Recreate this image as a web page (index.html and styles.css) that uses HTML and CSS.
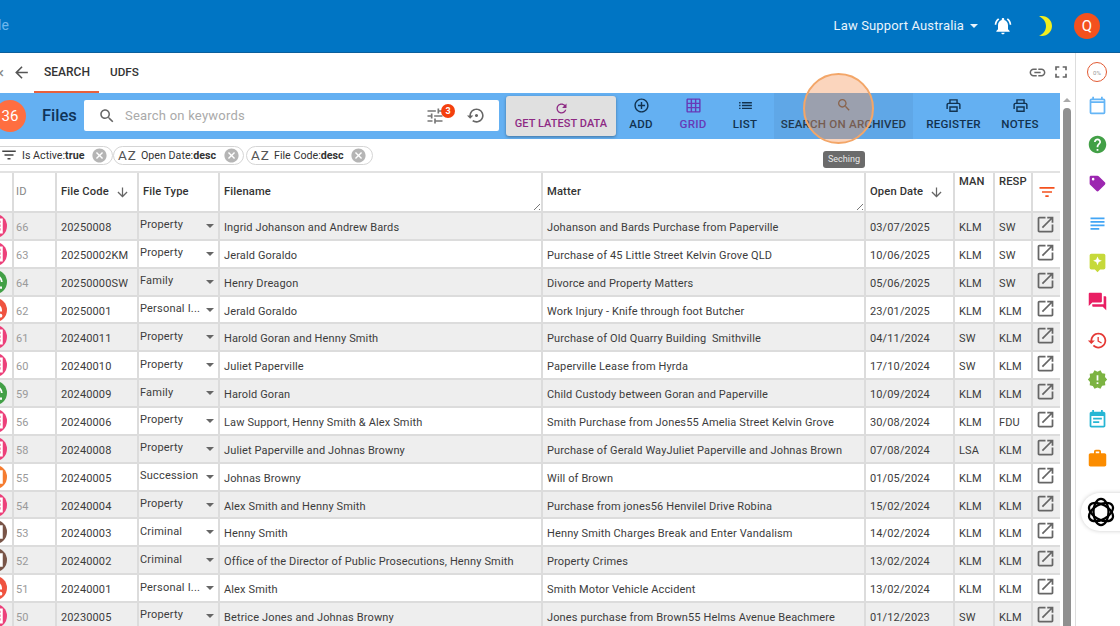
FILE: index.html
```html
<!DOCTYPE html>
<html lang="en">
<head>
<meta charset="utf-8">
<title>Files</title>
<link rel="stylesheet" href="styles.css">
</head>
<body>
<svg class="defs" width="0" height="0">
  <defs>
    <symbol id="i-open" viewBox="0 0 24 24"><path d="M19 19H5V5h7V3H5c-1.11 0-2 .9-2 2v14c0 1.1.89 2 2 2h14c1.1 0 2-.9 2-2v-7h-2v7zM14 3v2h3.59l-9.83 9.83 1.41 1.41L19 6.41V10h2V3h-7z"/></symbol>
    <symbol id="i-print" viewBox="0 0 24 24"><path d="M19 8h-1V3H6v5H5c-1.66 0-3 1.34-3 3v6h4v4h12v-4h4v-6c0-1.66-1.34-3-3-3zM8 5h8v3H8V5zm8 14H8v-4h8v4zm2-2v-4H6v4H4v-6c0-.55.45-1 1-1h14c.55 0 1 .45 1 1v6h-2z"/></symbol>
    <symbol id="i-cancel" viewBox="0 0 24 24"><path d="M12 2C6.47 2 2 6.47 2 12s4.47 10 10 10 10-4.47 10-10S17.53 2 12 2zm5 13.59L15.59 17 12 13.41 8.41 17 7 15.59 10.59 12 7 8.41 8.41 7 12 10.59 15.59 7 17 8.41 13.41 12 17 15.59z"/></symbol>
    <symbol id="i-down" viewBox="0 0 24 24"><path d="M20 12l-1.41-1.41L13 16.17V4h-2v12.17l-5.58-5.59L4 12l8 8 8-8z"/></symbol>
    <symbol id="i-filter" viewBox="0 0 24 24"><path d="M10 18h4v-2h-4v2zM3 6v2h18V6H3zm3 7h12v-2H6v2z"/></symbol>
    <symbol id="i-building" viewBox="0 0 24 24"><path d="M3 2h18v20H3zM6 5v3h3V5zm4.500 0v3h3V5zM15 5v3h3V5zM6 10v3h3v-3zm4.500 0v3h3v-3zm4.500 0v3h3v-3zM6 15v3h3v-3zm4.500 0v3h3v-3zm4.500 0v3h3v-3z" fill-rule="evenodd"/></symbol>
    <symbol id="i-people" viewBox="0 0 24 24"><path d="M12 3a9 9 0 0 0-9 9h2.500a6.500 6.500 0 0 1 13 0H21a9 9 0 0 0-9-9zm0 5a4 4 0 1 0 0 8 4 4 0 0 0 0-8zm0 2a2 2 0 1 1 0 4 2 2 0 0 1 0-4zM4 18h16v3H4z" fill-rule="evenodd"/></symbol>
    <symbol id="i-injury" viewBox="0 0 24 24"><path d="M12 4a8 8 0 0 0-8 8v2h3v-2a5 5 0 0 1 10 0v2h3v-2a8 8 0 0 0-8-8zM6 17a2.500 2.500 0 1 0 0 5 2.500 2.500 0 0 0 0-5zm12 0a2.500 2.500 0 1 0 0 5 2.500 2.500 0 0 0 0-5z"/></symbol>
    <symbol id="i-book" viewBox="0 0 24 24"><path d="M3 3h18v18H3zM7 6v12h3V6zm7 0v12h3V6z" fill-rule="evenodd"/></symbol>
  </defs>
</svg>

<header class="topbar">
  <span class="brand">Bundle</span>
  <div class="top-right">
    <span class="org">Law Support Australia</span>
    <span class="caret"></span>
    <svg class="bell" viewBox="0 0 24 24"><path d="M7.580 4.080L6.150 2.650C3.750 4.480 2.170 7.300 2.030 10.500h2c.15-2.650 1.510-4.970 3.550-6.420zm12.390 6.420h2c-.15-3.200-1.730-6.020-4.120-7.850l-1.420 1.430c2.020 1.450 3.390 3.770 3.540 6.420zM18 11c0-3.070-1.640-5.640-4.500-6.320V4c0-.83-.67-1.500-1.500-1.500s-1.500.67-1.500 1.500v.68C7.630 5.360 6 7.920 6 11v5l-2 2v1h16v-1l-2-2v-5zm-6 11c.14 0 .27-.01.4-.04.65-.14 1.180-.58 1.440-1.180.1-.24.15-.5.15-.78h-4c.01 1.100.9 2 2.010 2z"/></svg>
    <svg class="moon" viewBox="0 0 24 24"><path d="M9 2c-1.050 0-2.050.16-3 .46 4.060 1.270 7 5.060 7 9.540 0 4.480-2.940 8.270-7 9.540.95.3 1.950.46 3 .46 5.520 0 10-4.480 10-10S14.520 2 9 2z"/></svg>
    <span class="avatar">Q</span>
  </div>
</header>

<div class="body-row">
  <main class="content">
    <nav class="tabs">
      <span class="tab-x">×</span>
      <svg class="back" viewBox="0 0 24 24"><path d="M20 11H7.830l5.590-5.590L12 4l-8 8 8 8 1.410-1.410L7.830 13H20v-2z"/></svg>
      <span class="tab active">SEARCH</span>
      <span class="tab">UDFS</span>
      <span class="tab-tools">
        <svg class="tool-link" viewBox="0 0 24 24"><path d="M3.900 12c0-1.710 1.390-3.100 3.100-3.100h4V7H7c-2.760 0-5 2.240-5 5s2.240 5 5 5h4v-1.900H7c-1.710 0-3.100-1.390-3.100-3.100zM8 13h8v-2H8v2zm9-6h-4v1.900h4c1.710 0 3.100 1.390 3.100 3.100s-1.390 3.100-3.100 3.100h-4V17h4c2.760 0 5-2.240 5-5s-2.240-5-5-5z"/></svg>
        <svg class="tool-full" viewBox="0 0 24 24"><path d="M7 14H5v5h5v-2H7v-3zm-2-4h2V7h3V5H5v5zm12 7h-3v2h5v-5h-2v3zM14 5v2h3v3h2V5h-5z"/></svg>
      </span>
    </nav>

    <div class="main-scroll">
      <div class="panel">
        <section class="toolbar">
          <span class="count">36</span>
          <span class="title">Files</span>
          <div class="searchbox">
            <svg class="sb-search" viewBox="0 0 24 24"><path d="M15.500 14h-.79l-.28-.27C15.410 12.590 16 11.110 16 9.500 16 5.910 13.090 3 9.500 3S3 5.910 3 9.500 5.910 16 9.500 16c1.610 0 3.090-.59 4.230-1.570l.27.28v.79l5 4.990L20.490 19l-4.990-5zm-6 0C7.010 14 5 11.990 5 9.500S7.010 5 9.500 5 14 7.010 14 9.500 11.990 14 9.500 14z"/></svg>
            <span class="placeholder">Search on keywords</span>
            <span class="tune-wrap">
              <svg class="sb-tune" viewBox="0 0 24 24"><path d="M3 17v2h6v-2H3zM3 5v2h10V5H3zm10 16v-2h8v-2h-8v-2h-2v6h2zM7 9v2H3v2h4v2h2V9H7zm14 4v-2H11v2h10zm-6-4h2V7h4V5h-4V3h-2v6z"/></svg>
              <span class="tune-badge">3</span>
            </span>
            <svg class="sb-restore" viewBox="0 0 24 24"><path d="M14 12c0-1.100-.9-2-2-2s-2 .9-2 2 .9 2 2 2 2-.9 2-2zm-2-9c-4.970 0-9 4.030-9 9H0l4 4 4-4H5c0-3.870 3.130-7 7-7s7 3.130 7 7-3.130 7-7 7c-1.510 0-2.910-.49-4.060-1.300l-1.420 1.440C8.040 20.300 9.940 21 12 21c4.970 0 9-4.030 9-9s-4.030-9-9-9z"/></svg>
          </div>
          <button class="latest">
            <svg viewBox="0 0 24 24"><path d="M17.650 6.350C16.200 4.900 14.210 4 12 4c-4.420 0-7.990 3.580-7.990 8s3.570 8 7.990 8c3.730 0 6.840-2.550 7.730-6h-2.080c-.82 2.330-3.040 4-5.650 4-3.310 0-6-2.690-6-6s2.690-6 6-6c1.660 0 3.140.69 4.220 1.780L13 11h7V4l-2.350 2.350z"/></svg>
            <span>GET LATEST DATA</span>
          </button>
          <div class="actions">
            <button class="act"><svg viewBox="0 0 24 24"><path d="M13 7h-2v4H7v2h4v4h2v-4h4v-2h-4V7zm-1-5C6.480 2 2 6.480 2 12s4.480 10 10 10 10-4.480 10-10S17.520 2 12 2zm0 18c-4.410 0-8-3.590-8-8s3.590-8 8-8 8 3.590 8 8-3.590 8-8 8z"/></svg><span>ADD</span></button>
            <button class="act act-grid"><svg viewBox="0 0 24 24"><path d="M20 2H4c-1.100 0-2 .9-2 2v16c0 1.100.9 2 2 2h16c1.100 0 2-.9 2-2V4c0-1.100-.9-2-2-2zM8 20H4v-4h4v4zm0-6H4v-4h4v4zm0-6H4V4h4v4zm6 12h-4v-4h4v4zm0-6h-4v-4h4v4zm0-6h-4V4h4v4zm6 12h-4v-4h4v4zm0-6h-4v-4h4v4zm0-6h-4V4h4v4z"/></svg><span>GRID</span></button>
            <button class="act"><svg viewBox="0 0 24 24"><path d="M3 13h2v-2H3v2zm0 4h2v-2H3v2zm0-8h2V7H3v2zm4 4h14v-2H7v2zm0 4h14v-2H7v2zM7 7v2h14V7H7z"/></svg><span>LIST</span></button>
            <span></span>
            <button class="act act-hover"><svg viewBox="0 0 24 24"><path d="M15.500 14h-.79l-.28-.27C15.410 12.590 16 11.110 16 9.500 16 5.910 13.090 3 9.500 3S3 5.910 3 9.500 5.910 16 9.500 16c1.610 0 3.090-.59 4.230-1.570l.27.28v.79l5 4.990L20.490 19l-4.990-5zm-6 0C7.010 14 5 11.990 5 9.500S7.010 5 9.500 5 14 7.010 14 9.500 11.990 14 9.500 14z"/></svg><span>SEARCH ON ARCHIVED</span></button>
            <button class="act"><svg><use href="#i-print"/></svg><span>REGISTER</span></button>
            <button class="act"><svg><use href="#i-print"/></svg><span>NOTES</span></button>
          </div>
        </section>

        <div class="chips">
          <span class="chip chip-1"><svg class="chip-f"><use href="#i-filter"/></svg><span class="chip-t">Is Active:<b>true</b></span><svg class="chip-x"><use href="#i-cancel"/></svg></span>
          <span class="chip chip-2"><span class="az">A<i>Z</i></span><span class="chip-t">Open Date:<b>desc</b></span><svg class="chip-x"><use href="#i-cancel"/></svg></span>
          <span class="chip chip-3"><span class="az">A<i>Z</i></span><span class="chip-t">File Code:<b>desc</b></span><svg class="chip-x"><use href="#i-cancel"/></svg></span>
        </div>

        <div class="grid">
          <div class="row head">
            <div class="c"></div>
            <div class="c id">ID</div>
            <div class="c">File Code<svg class="sort"><use href="#i-down"/></svg></div>
            <div class="c">File Type</div>
            <div class="c rs">Filename</div>
            <div class="c rs">Matter</div>
            <div class="c">Open Date<svg class="sort"><use href="#i-down"/></svg></div>
            <div class="c top">MAN</div>
            <div class="c top">RESP</div>
            <div class="c act-c"><svg class="hfilter"><use href="#i-filter"/></svg></div>
          </div>

          <div class="row"><div class="c st"><span class="dot pink"><svg><use href="#i-building"/></svg></span></div><div class="c id">66</div><div class="c">20250008</div><div class="c ty"><span>Property</span><i class="dd"></i></div><div class="c">Ingrid Johanson and Andrew Bards</div><div class="c">Johanson and Bards Purchase from Paperville</div><div class="c">03/07/2025</div><div class="c">KLM</div><div class="c">SW</div><div class="c act-c"><svg class="open"><use href="#i-open"/></svg></div></div>
          <div class="row"><div class="c st"><span class="dot pink"><svg><use href="#i-building"/></svg></span></div><div class="c id">63</div><div class="c">20250002KM</div><div class="c ty"><span>Property</span><i class="dd"></i></div><div class="c">Jerald Goraldo</div><div class="c">Purchase of 45 Little Street Kelvin Grove QLD</div><div class="c">10/06/2025</div><div class="c">KLM</div><div class="c">SW</div><div class="c act-c"><svg class="open"><use href="#i-open"/></svg></div></div>
          <div class="row"><div class="c st"><span class="dot green"><svg><use href="#i-people"/></svg></span></div><div class="c id">64</div><div class="c">20250000SW</div><div class="c ty"><span>Family</span><i class="dd"></i></div><div class="c">Henry Dreagon</div><div class="c">Divorce and Property Matters</div><div class="c">05/06/2025</div><div class="c">KLM</div><div class="c">SW</div><div class="c act-c"><svg class="open"><use href="#i-open"/></svg></div></div>
          <div class="row"><div class="c st"><span class="dot red"><svg><use href="#i-injury"/></svg></span></div><div class="c id">62</div><div class="c">20250001</div><div class="c ty"><span>Personal I...</span><i class="dd"></i></div><div class="c">Jerald Goraldo</div><div class="c">Work Injury - Knife through foot Butcher</div><div class="c">23/01/2025</div><div class="c">KLM</div><div class="c">KLM</div><div class="c act-c"><svg class="open"><use href="#i-open"/></svg></div></div>
          <div class="row"><div class="c st"><span class="dot pink"><svg><use href="#i-building"/></svg></span></div><div class="c id">61</div><div class="c">20240011</div><div class="c ty"><span>Property</span><i class="dd"></i></div><div class="c">Harold Goran and Henny Smith</div><div class="c">Purchase of Old Quarry Building&nbsp; Smithville</div><div class="c">04/11/2024</div><div class="c">SW</div><div class="c">KLM</div><div class="c act-c"><svg class="open"><use href="#i-open"/></svg></div></div>
          <div class="row"><div class="c st"><span class="dot pink"><svg><use href="#i-building"/></svg></span></div><div class="c id">60</div><div class="c">20240010</div><div class="c ty"><span>Property</span><i class="dd"></i></div><div class="c">Juliet Paperville</div><div class="c">Paperville Lease from Hyrda</div><div class="c">17/10/2024</div><div class="c">SW</div><div class="c">KLM</div><div class="c act-c"><svg class="open"><use href="#i-open"/></svg></div></div>
          <div class="row"><div class="c st"><span class="dot green"><svg><use href="#i-people"/></svg></span></div><div class="c id">59</div><div class="c">20240009</div><div class="c ty"><span>Family</span><i class="dd"></i></div><div class="c">Harold Goran</div><div class="c">Child Custody between Goran and Paperville</div><div class="c">10/09/2024</div><div class="c">KLM</div><div class="c">KLM</div><div class="c act-c"><svg class="open"><use href="#i-open"/></svg></div></div>
          <div class="row"><div class="c st"><span class="dot pink"><svg><use href="#i-building"/></svg></span></div><div class="c id">56</div><div class="c">20240006</div><div class="c ty"><span>Property</span><i class="dd"></i></div><div class="c">Law Support, Henny Smith &amp; Alex Smith</div><div class="c">Smith Purchase from Jones55 Amelia Street Kelvin Grove</div><div class="c">30/08/2024</div><div class="c">KLM</div><div class="c">FDU</div><div class="c act-c"><svg class="open"><use href="#i-open"/></svg></div></div>
          <div class="row"><div class="c st"><span class="dot pink"><svg><use href="#i-building"/></svg></span></div><div class="c id">58</div><div class="c">20240008</div><div class="c ty"><span>Property</span><i class="dd"></i></div><div class="c">Juliet Paperville and Johnas Browny</div><div class="c">Purchase of Gerald WayJuliet Paperville and Johnas Brown</div><div class="c">07/08/2024</div><div class="c">LSA</div><div class="c">KLM</div><div class="c act-c"><svg class="open"><use href="#i-open"/></svg></div></div>
          <div class="row"><div class="c st"><span class="dot orange"><svg><use href="#i-book"/></svg></span></div><div class="c id">55</div><div class="c">20240005</div><div class="c ty"><span>Succession</span><i class="dd"></i></div><div class="c">Johnas Browny</div><div class="c">Will of Brown</div><div class="c">01/05/2024</div><div class="c">KLM</div><div class="c">KLM</div><div class="c act-c"><svg class="open"><use href="#i-open"/></svg></div></div>
          <div class="row"><div class="c st"><span class="dot pink"><svg><use href="#i-building"/></svg></span></div><div class="c id">54</div><div class="c">20240004</div><div class="c ty"><span>Property</span><i class="dd"></i></div><div class="c">Alex Smith and Henny Smith</div><div class="c">Purchase from jones56 Henvilel Drive Robina</div><div class="c">15/02/2024</div><div class="c">KLM</div><div class="c">KLM</div><div class="c act-c"><svg class="open"><use href="#i-open"/></svg></div></div>
          <div class="row"><div class="c st"><span class="dot brown"><svg><use href="#i-book"/></svg></span></div><div class="c id">53</div><div class="c">20240003</div><div class="c ty"><span>Criminal</span><i class="dd"></i></div><div class="c">Henny Smith</div><div class="c">Henny Smith Charges Break and Enter Vandalism</div><div class="c">14/02/2024</div><div class="c">KLM</div><div class="c">KLM</div><div class="c act-c"><svg class="open"><use href="#i-open"/></svg></div></div>
          <div class="row"><div class="c st"><span class="dot brown"><svg><use href="#i-book"/></svg></span></div><div class="c id">52</div><div class="c">20240002</div><div class="c ty"><span>Criminal</span><i class="dd"></i></div><div class="c">Office of the Director of Public Prosecutions, Henny Smith</div><div class="c">Property Crimes</div><div class="c">13/02/2024</div><div class="c">KLM</div><div class="c">KLM</div><div class="c act-c"><svg class="open"><use href="#i-open"/></svg></div></div>
          <div class="row"><div class="c st"><span class="dot red"><svg><use href="#i-injury"/></svg></span></div><div class="c id">51</div><div class="c">20240001</div><div class="c ty"><span>Personal I...</span><i class="dd"></i></div><div class="c">Alex Smith</div><div class="c">Smith Motor Vehicle Accident</div><div class="c">13/02/2024</div><div class="c">KLM</div><div class="c">KLM</div><div class="c act-c"><svg class="open"><use href="#i-open"/></svg></div></div>
          <div class="row"><div class="c st"><span class="dot pink"><svg><use href="#i-building"/></svg></span></div><div class="c id">50</div><div class="c">20230005</div><div class="c ty"><span>Property</span><i class="dd"></i></div><div class="c">Betrice Jones and Johnas Browny</div><div class="c">Jones purchase from Brown55 Helms Avenue Beachmere</div><div class="c">01/12/2023</div><div class="c">SW</div><div class="c">KLM</div><div class="c act-c"><svg class="open"><use href="#i-open"/></svg></div></div>
        </div>
      </div>

      <div class="scrollbar">
        <span class="sb-up"></span>
        <span class="sb-thumb"></span>
      </div>
    </div>

    <span class="spot"></span>
    <span class="tip">Seching</span>
  </main>

  <aside class="rail">
    <span class="progress">0%</span>
    <svg class="r-ic r-cal" viewBox="0 0 24 24"><path d="M19 4h-1V2h-2v2H8V2H6v2H5a2 2 0 0 0-2 2v14a2 2 0 0 0 2 2h14a2 2 0 0 0 2-2V6a2 2 0 0 0-2-2zm0 16H5V9h14v11zM5 7V6h14v1H5z"/></svg>
    <svg class="r-ic r-help" viewBox="0 0 24 24"><path d="M12 2C6.480 2 2 6.480 2 12s4.480 10 10 10 10-4.480 10-10S17.520 2 12 2zm1 17h-2v-2h2v2zm2.070-7.750l-.9.92C13.450 12.900 13 13.500 13 15h-2v-.5c0-1.100.45-2.100 1.170-2.830l1.240-1.260c.37-.36.59-.86.59-1.410 0-1.100-.9-2-2-2s-2 .9-2 2H8c0-2.210 1.790-4 4-4s4 1.790 4 4c0 .88-.36 1.680-.93 2.250z"/></svg>
    <svg class="r-ic r-tag" viewBox="0 0 24 24"><path d="M3 4.500C3 3.700 3.700 3 4.500 3H12c.5 0 1 .2 1.400.6l7 7c.8.8.8 2 0 2.800l-7 7c-.8.8-2 .8-2.800 0l-7-7C3.200 13 3 12.500 3 12V4.500zM7 5.500a1.500 1.500 0 1 0 0 3 1.500 1.500 0 0 0 0-3z" fill-rule="evenodd"/></svg>
    <svg class="r-ic r-sub" viewBox="0 0 24 24"><path d="M14 17H4v2h10v-2zm6-8H4v2h16V9zM4 15h16v-2H4v2zM4 5v2h16V5H4z"/></svg>
    <svg class="r-ic r-note" viewBox="0 0 24 24"><path d="M5 2h14a2 2 0 0 1 2 2v14a2 2 0 0 1-2 2h-4l-3 3-3-3H5a2 2 0 0 1-2-2V4a2 2 0 0 1 2-2zm7 3l-1.500 3.500L7 10l3.500 1.500L12 15l1.500-3.500L17 10l-3.500-1.500z" fill-rule="evenodd"/></svg>
    <svg class="r-ic r-forum" viewBox="0 0 24 24"><path d="M21 6h-2v9H6v2c0 .55.45 1 1 1h11l4 4V7c0-.55-.45-1-1-1zm-4 6V3c0-.55-.45-1-1-1H3c-.55 0-1 .45-1 1v14l4-4h10c.55 0 1-.45 1-1z"/></svg>
    <svg class="r-ic r-hist" viewBox="0 0 24 24"><path d="M13 3c-4.970 0-9 4.030-9 9H1l3.890 3.890.07.14L9 12H6c0-3.870 3.130-7 7-7s7 3.130 7 7-3.130 7-7 7c-1.930 0-3.680-.79-4.940-2.060l-1.420 1.420C8.270 19.990 10.510 21 13 21c4.970 0 9-4.030 9-9s-4.030-9-9-9zm-1 5v5l4.280 2.540.72-1.210-3.500-2.080V8H12z"/></svg>
    <svg class="r-ic r-new" viewBox="0 0 24 24"><path d="M23 12l-2.440-2.780.34-3.680-3.610-.82-1.890-3.180L12 3 8.600 1.540 6.710 4.720l-3.610.81.34 3.680L1 12l2.440 2.780-.34 3.690 3.610.82 1.890 3.180L12 21l3.400 1.460 1.890-3.180 3.610-.82-.34-3.680L23 12zm-10 5h-2v-2h2v2zm0-4h-2V7h2v6z"/></svg>
    <svg class="r-ic r-event" viewBox="0 0 24 24"><path d="M17 10H7v2h10v-2zm2-7h-1V1h-2v2H8V1H6v2H5c-1.110 0-1.990.9-1.990 2L3 19c0 1.100.89 2 2 2h14c1.100 0 2-.9 2-2V5c0-1.100-.9-2-2-2zm0 16H5V8h14v11zm-5-5H7v2h7v-2z"/></svg>
    <svg class="r-ic r-work" viewBox="0 0 24 24"><path d="M20 6h-4V4c0-1.110-.89-2-2-2h-4c-1.110 0-2 .89-2 2v2H4c-1.110 0-1.990.89-1.990 2L2 19c0 1.110.89 2 2 2h16c1.110 0 2-.89 2-2V8c0-1.110-.89-2-2-2zm-6 0h-4V4h4v2z"/></svg>
    <span class="ai-tab">
      <svg viewBox="0 0 32 32"><g fill="none" stroke="#000" stroke-width="2.400">
        <ellipse cx="16" cy="16" rx="8" ry="14"/>
        <ellipse cx="16" cy="16" rx="8" ry="14" transform="rotate(60 16 16)"/>
        <ellipse cx="16" cy="16" rx="8" ry="14" transform="rotate(120 16 16)"/>
      </g></svg>
    </span>
  </aside>
</div>
</body>
</html>
```
FILE: styles.css
```css
* { box-sizing: border-box; }
html, body { margin: 0; height: 626px; overflow: hidden; }
body { font-family: Roboto, "Liberation Sans", sans-serif; color: #333; background: #fff; display: flex; flex-direction: column; }
.defs { position: absolute; }
svg { display: block; fill: currentColor; }
button { font: inherit; border: 0; background: none; padding: 0; }

.topbar { height: 53px; flex: none; background: #0075c4; border-bottom: 1px solid #0a5f9c; display: flex; align-items: center; justify-content: space-between; overflow: hidden; }
.brand { margin-left: -34px; font-size: 14px; color: #6db8ee; margin-top: -2px; }
.top-right { display: flex; align-items: center; padding-right: 20px; color: #fff; margin-top: -1px; }
.org { font-size: 13px; color: #e9f4fc; letter-spacing: .15px; }
.caret { width: 0; height: 0; border: 4px solid transparent; border-top: 4px solid #e9f4fc; border-bottom: 0; margin-left: 6px; margin-top: 1px; }
.bell { width: 20px; height: 20px; margin-left: 15px; }
.moon { width: 24px; height: 24px; margin-left: 20px; color: #f2ee1e; }
.avatar { width: 26px; height: 26px; margin-left: 17px; border-radius: 50%; background: #f4511e; color: #fff; font-size: 15px; display: flex; align-items: center; justify-content: center; }

.body-row { flex: 1; display: flex; min-height: 0; }
.content { flex: 1; min-width: 0; position: relative; overflow: hidden; display: flex; flex-direction: column; }

.tabs { height: 40px; flex: none; display: flex; align-items: center; color: #333; }
.tab-x { margin-left: -4px; width: 9px; font-size: 15px; color: #888; }
.back { width: 19px; height: 19px; margin-left: 7px; color: #555; margin-top: -2px; }
.tab { font-size: 12px; font-weight: 500; height: 40px; line-height: 38px; padding: 0 10px; color: #333; }
.tab.active { margin-left: 3px; width: 65px; padding: 0 10px; border-bottom: 2px solid #e8603c; }
.tab.active + .tab { margin-left: 1px; font-size: 11.700px; }
.tab-tools { margin-left: auto; display: flex; align-items: center; gap: 4px; padding-right: 4px; color: #666; margin-top: -2px; }
.tool-link { width: 19px; height: 19px; }
.tool-full { width: 20px; height: 20px; }

.main-scroll { flex: 1; display: flex; min-height: 0; }
.panel { flex: 1; min-width: 0; margin-left: -20px; display: flex; flex-direction: column; }

.toolbar { height: 46px; flex: none; background: #64b0f2; display: flex; align-items: center; position: relative; color: #12324f; }
.count { width: 32px; height: 32px; border-radius: 50%; background: #ff6e40; color: #fff; font-size: 15px; margin-left: 14px; display: flex; align-items: center; justify-content: center; }
.title { font-size: 16.500px; font-weight: 500; margin-left: 16px; width: 42px; color: #0f3358; margin-top: -1px; }
.searchbox { width: 415px; height: 31px; background: #fff; border-radius: 2px; display: flex; align-items: center; margin-top: -1px; }
.sb-search { width: 18px; height: 18px; margin-left: 14px; color: #666; }
.placeholder { margin-left: 9px; font-size: 13px; color: #aaa; letter-spacing: .22px; }
.tune-wrap { margin-left: auto; position: relative; display: block; }
.sb-tune { width: 20px; height: 20px; color: #777; }
.tune-badge { position: absolute; right: -10px; top: -2px; width: 14px; height: 14px; border-radius: 50%; background: #f4400e; color: #fff; font-size: 9px; font-weight: 700; text-align: center; line-height: 14px; }
.sb-restore { width: 19px; height: 19px; margin-left: 22px; margin-right: 13px; color: #666; }
.latest { width: 110px; height: 40px; margin-left: 7px; border-radius: 3px; background: #e0e0e0; box-shadow: 0 1px 3px rgba(0,0,0,.35); color: #8e2a84; display: flex; flex-direction: column; align-items: center; justify-content: center; font-size: 11px; font-weight: 500; letter-spacing: .05px; }
.latest svg { width: 15px; height: 15px; margin-bottom: 1px; margin-top: -2px; }
.actions { display: grid; grid-template-columns: 50px 54px 50px 4px 139px 81px 52px; height: 46px; }
.act { display: flex; flex-direction: column; align-items: center; justify-content: flex-start; height: 46px; padding-top: 4px; color: #12324f; font-size: 11.600px; font-weight: 500; letter-spacing: .2px; }
.act svg { width: 17px; height: 17px; margin-bottom: 3px; }
.act-grid { color: #673ab7; }
.act-hover { background: rgba(40,70,100,.08); color: #22384e; }
.act-hover svg { color: #444; width: 16px; height: 16px; margin-bottom: 4px; }

.chips { height: 32px; flex: none; display: flex; align-items: center; }
.chip { height: 19px; border: 1px solid #d5d5d5; border-radius: 10px; display: flex; align-items: center; font-size: 10.700px; color: #333; padding-right: 5px; }
.chip b { font-weight: 700; }
.chip-1 { width: 133px; padding-left: 19px; padding-right: 4px; }
.chip-2 { width: 131px; padding-right: 3px; }
.chip-3 { width: 127px; margin-left: 2px; }
.chip-f { width: 18px; height: 18px; color: #444; margin-right: 4px; flex: none; }
.chip-x { width: 17px; height: 17px; color: #b5b5b5; margin-left: auto; flex: none; }
.chip-t { white-space: nowrap; }
.az { width: 23px; margin-left: 4px; font-size: 13.500px; color: #555; font-weight: 400; flex: none; display: flex; }
.az i { font-style: normal; margin-left: 1px; }

.grid { flex: none; border-top: 2px solid #e2e2e2; }
.row { display: grid; grid-template-columns: 34px 43px 82px 81px 323px 323px 89px 40px 38px 27px; height: 27.860px; background: #fff; align-items: stretch; font-size: 11px; color: #3c3c3c; }
.row:nth-child(even) { background: #eee; }
.row.head { height: 40px; background: #fff; font-size: 11.200px; font-weight: 500; color: #333; border-bottom: 2px solid #dcdcdc; }
.c { border-right: 2px solid #dcdcdc; border-bottom: 2px solid #dcdcdc; padding: 3px 3px 0 4px; white-space: nowrap; overflow: hidden; display: flex; align-items: center; position: relative; letter-spacing: .13px; }
.row.head .c { border-bottom: 0; padding-top: 0; padding-bottom: 1px; }
.row.head .c.top { align-items: flex-start; padding-top: 2px; }
.row.head .id { color: #888; font-weight: 400; }
.id { color: #9a9a9a; padding-left: 2px; }
.rs::after { content: ""; position: absolute; right: 1px; bottom: 1px; width: 7px; height: 7px; background: repeating-linear-gradient(135deg, transparent 0 1.500px, #777 1.500px 2.500px, transparent 2.500px 3.500px); clip-path: polygon(100% 0, 100% 100%, 0 100%); }
.sort { width: 15px; height: 15px; margin-left: 6px; color: #666; margin-top: 1px; flex: none; }
.hfilter { width: 20px; height: 20px; color: #f4511e; }
.act-c { padding: 0; justify-content: center; align-items: center; border-right: 0; }
.open { width: 21px; height: 21px; color: #666; margin-top: -3px; margin-left: -2px; }
.ty { padding: 0 0 2px 1px; font-size: 11px; justify-content: space-between; letter-spacing: .2px; }
.dd { width: 0; height: 0; border: 4px solid transparent; border-top: 4px solid #666; border-bottom: 0; margin-right: 4px; margin-top: 2px; }
.st { padding: 0; overflow: hidden; justify-content: flex-end; padding-right: 5px; }
.dot { width: 24px; height: 24px; border-radius: 50%; display: flex; align-items: center; justify-content: flex-end; padding-right: 2px; color: #fff; flex: none; }
.dot svg { width: 18px; height: 18px; }
.pink { background: #ec407a; }
.green { background: #43a047; }
.red { background: #ef5340; }
.orange { background: #f57c30; }
.brown { background: #795548; }

.scrollbar { width: 15px; flex: none; position: relative; padding: 12px 2px 0 2px; }
.sb-up { position: absolute; left: 3px; top: 5px; width: 0; height: 0; border: 4px solid transparent; border-bottom: 4px solid #aaa; border-top: 0; }
.sb-thumb { display: block; width: 8px; margin-left: 1px; height: 600px; background: #909090; border-radius: 4px 4px 0 0; margin-top: 3px; }

.spot { position: absolute; left: 803px; top: 20px; width: 71px; height: 71px; border-radius: 50%; background: rgba(245,150,90,.4); border: 2px solid #f3a668; }
.tip { position: absolute; left: 823px; top: 98px; width: 42px; height: 17px; background: #6b6b6b; border-radius: 3px; color: #e8e8e8; font-size: 9px; text-align: center; line-height: 17px; }

.rail { width: 45px; flex: none; border-left: 1px solid #ddd; display: flex; flex-direction: column; align-items: center; position: relative; padding-top: 9px; padding-right: 2px; }
.progress { width: 20px; height: 20px; border: 1.500px solid #e25a33; border-radius: 50%; font-size: 6px; color: #999; display: flex; align-items: center; justify-content: center; }
.r-ic { width: 21px; height: 21px; margin-top: 18.200px; flex: none; }
.r-cal { color: #64b5f6; margin-top: 13px; }
.r-help { color: #43a047; }
.r-tag { color: #9c27b0; }
.r-sub { color: #42a5f5; }
.r-note { color: #c6d93a; }
.r-forum { color: #e91e63; }
.r-hist { color: #e53935; }
.r-new { color: #7cb342; }
.r-event { color: #26b6d4; }
.r-work { color: #fb8c00; }
.ai-tab { position: absolute; left: 5px; top: 440px; width: 60px; height: 38px; border-radius: 19px; background: #fff; box-shadow: 0 0 4px rgba(0,0,0,.2); display: flex; align-items: center; padding-left: 5px; }
.ai-tab svg { width: 30px; height: 30px; }
```
